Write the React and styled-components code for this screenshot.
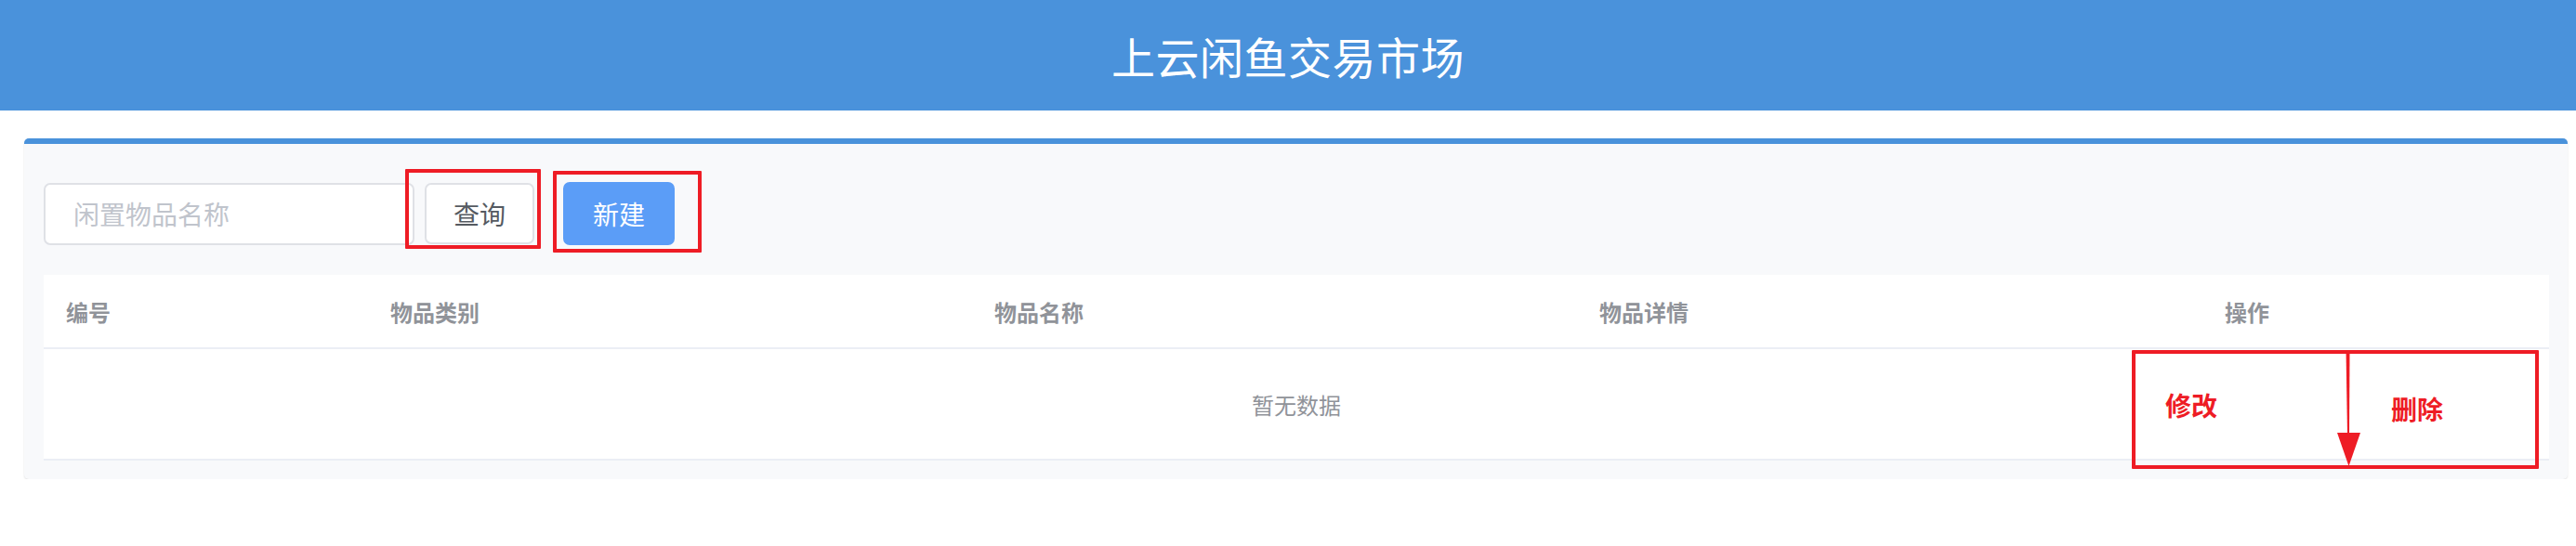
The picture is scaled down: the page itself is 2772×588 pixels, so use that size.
import React from "react";
import styled, { createGlobalStyle } from "styled-components";

const Global = createGlobalStyle`
  html, body { margin: 0; padding: 0; background: #ffffff; }
  body { font-family: "Noto Sans CJK SC", "Noto Sans", sans-serif; }
  * { box-sizing: border-box; }
`;

const Header = styled.header`
  height: 119px;
  background: #4a92db;
  display: flex;
  align-items: center;
  justify-content: center;
`;

const Title = styled.h1`
  margin: 0;
  color: #ffffff;
  font-size: 47px;
  font-weight: 400;
  letter-spacing: 0.5px;
  line-height: 1;
`;

const Main = styled.main`
  padding: 30px 9px 0 26px;
`;

const Card = styled.section`
  background: #f8f9fb;
  border-top: 6px solid #4a92db;
  border-radius: 5px;
  box-shadow: 0 1px 2px rgba(0, 0, 0, 0.12);
  padding: 40px 20px 20px 21px;
`;

const Toolbar = styled.div`
  display: flex;
  align-items: center;
  height: 70px;
`;

const SearchInput = styled.input`
  width: 399px;
  height: 67px;
  border: 2px solid #dfe1e6;
  border-radius: 7px;
  background: #ffffff;
  padding: 0 30px;
  font-family: inherit;
  font-size: 28px;
  color: #606266;
  outline: none;
  &::placeholder { color: #c0c4cc; }
`;

const Marked = styled.div`
  position: relative;
  margin-left: ${(p) => p.$ml}px;
`;

const Frame = styled.div`
  position: absolute;
  left: ${(p) => p.$l}px;
  top: ${(p) => p.$t}px;
  width: ${(p) => p.$w}px;
  height: ${(p) => p.$h}px;
  border: 4px solid #ee1c25;
  border-radius: 1px;
  pointer-events: none;
`;

const Button = styled.button`
  display: flex;
  align-items: center;
  justify-content: center;
  width: ${(p) => p.$w}px;
  height: ${(p) => p.$h}px;
  border-radius: 7px;
  font-family: inherit;
  font-size: 28px;
  padding: 0;
  border: 2px solid ${(p) => (p.$primary ? "#5b9df7" : "#dfe1e6")};
  background: ${(p) => (p.$primary ? "#5b9df7" : "#ffffff")};
  color: ${(p) => (p.$primary ? "#ffffff" : "#555a61")};
`;

const Table = styled.div`
  position: relative;
  margin-top: 31px;
  background: #ffffff;
`;

const HeadRow = styled.div`
  display: grid;
  grid-template-columns: 349px 650px 651px 673px 1fr;
  height: 80px;
  border-bottom: 2px solid #ebeef5;
  align-items: center;
`;

const HeadCell = styled.div`
  padding-left: 24px;
  font-size: 24px;
  font-weight: 700;
  color: #909399;
`;

const EmptyRow = styled.div`
  height: 120px;
  border-bottom: 2px solid #ebeef5;
  display: flex;
  align-items: center;
  justify-content: center;
  font-size: 24px;
  color: #909399;
`;

const Note = styled.div`
  position: absolute;
  left: 2247px;
  top: 81px;
  width: 438px;
  height: 128px;
  border: 4px solid #ee1c25;
  border-radius: 1px;
  pointer-events: none;
`;

const NoteText = styled.span`
  position: absolute;
  left: ${(p) => p.$l}px;
  top: ${(p) => p.$t}px;
  color: #ee1c25;
  font-size: 28px;
  font-weight: 700;
  line-height: 1;
`;

const Arrow = styled.svg`
  position: absolute;
  left: 213px;
  top: -4px;
`;

export default function App() {
  return (
    <>
      <Global />
      <Header>
        <Title>上云闲鱼交易市场</Title>
      </Header>
      <Main>
        <Card>
          <Toolbar>
            <SearchInput placeholder="闲置物品名称" />
            <Marked $ml={11}>
              <Button $w={118} $h={66}>查询</Button>
              <Frame $l={-21} $t={-15} $w={146} $h={86} />
            </Marked>
            <Marked $ml={31}>
              <Button $primary $w={120} $h={68}>新建</Button>
              <Frame $l={-11} $t={-12} $w={160} $h={88} />
            </Marked>
          </Toolbar>
          <Table>
            <HeadRow>
              <HeadCell>编号</HeadCell>
              <HeadCell>物品类别</HeadCell>
              <HeadCell>物品名称</HeadCell>
              <HeadCell>物品详情</HeadCell>
              <HeadCell>操作</HeadCell>
            </HeadRow>
            <EmptyRow>暂无数据</EmptyRow>
            <Note>
              <NoteText $l={32} $t={41}>修改</NoteText>
              <NoteText $l={275} $t={45}>删除</NoteText>
              <Arrow width="30" height="126" viewBox="0 0 30 126">
                <polygon points="13.5,0 17.5,0 17,92 15,92" fill="#ee1c25" />
                <polygon points="4,89 29,89 16.5,125" fill="#ee1c25" />
              </Arrow>
            </Note>
          </Table>
        </Card>
      </Main>
    </>
  );
}
